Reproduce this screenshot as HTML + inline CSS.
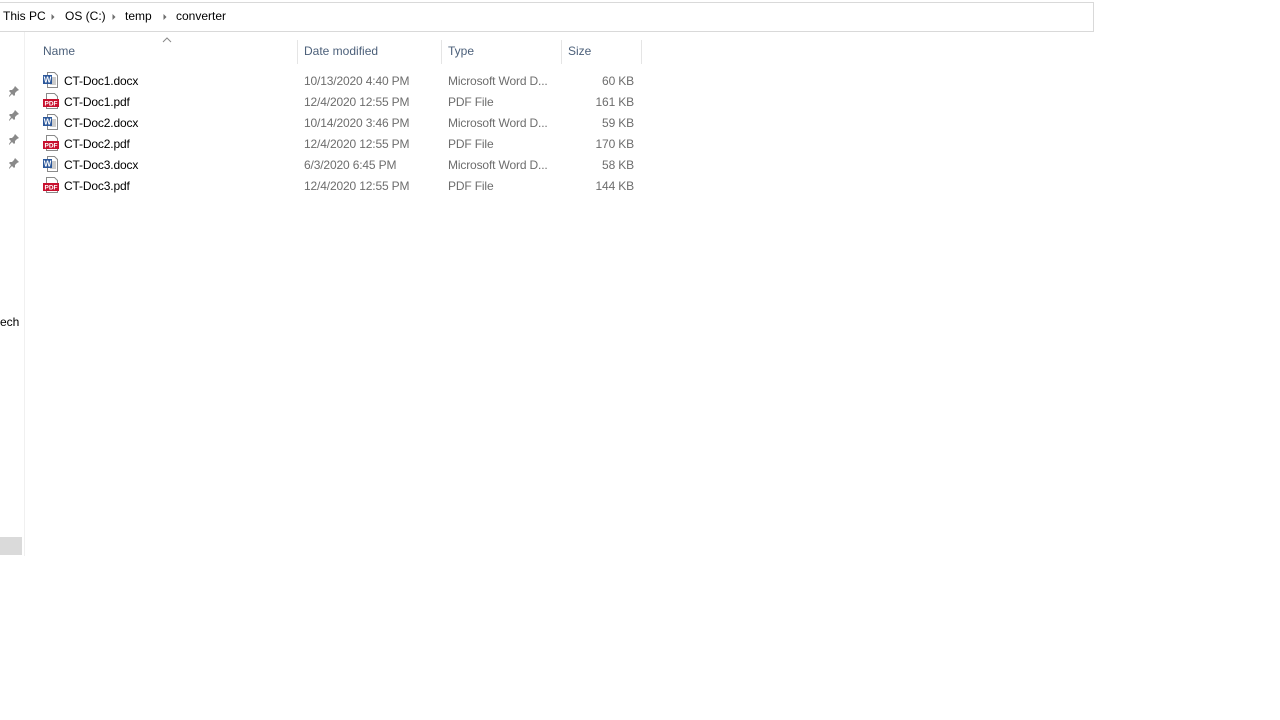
<!DOCTYPE html>
<html><head><style>
body{margin:0;width:1280px;height:720px;background:#fff;font-family:"Liberation Sans",sans-serif;font-size:12px;color:#000;position:relative;overflow:hidden}
.a{position:absolute;white-space:nowrap}
.g{color:#6d6d6d}
.h{color:#4c607a}
.sep{position:absolute;top:40px;height:24px;width:1px;background:#e5e5e5}
.r{text-align:right;width:60px}
.t{letter-spacing:-0.15px}
</style></head><body>
<div class="a" style="left:0;top:2px;width:1094px;height:1px;background:#d9d9d9"></div>
<div class="a" style="left:0;top:31px;width:1094px;height:1px;background:#d9d9d9"></div>
<div class="a" style="left:1093px;top:2px;width:1px;height:30px;background:#d9d9d9"></div>
<div class="a" style="left:3px;top:9px">This PC</div>
<svg class="a" style="left:50px;top:13px" width="6" height="8"><path d="M1.5 1l3 3-3 3z" fill="#6d6d6d"/></svg>
<div class="a" style="left:65px;top:9px">OS (C:)</div>
<svg class="a" style="left:111px;top:13px" width="6" height="8"><path d="M1.5 1l3 3-3 3z" fill="#6d6d6d"/></svg>
<div class="a" style="left:125px;top:9px">temp</div>
<svg class="a" style="left:162px;top:13px" width="6" height="8"><path d="M1.5 1l3 3-3 3z" fill="#6d6d6d"/></svg>
<div class="a" style="left:176px;top:9px">converter</div>
<div class="a" style="left:24px;top:32px;width:1px;height:524px;background:#f0f0f0"></div>
<div class="a" style="left:0;top:537px;width:22px;height:18px;background:#dadada"></div>
<div class="a" style="left:0;top:315px">ech</div>
<svg class="a" style="left:8px;top:85px" width="12" height="84" fill="#8a8a8a"><g id="p"><path d="M7 1l4 4-2 1-2 2 0 2-1 1-2-2-3 3v-1l2-3-2-2 1-1h2l2-2z"/></g><use href="#p" y="24"/><use href="#p" y="48"/><use href="#p" y="72"/></svg>
<svg class="a" style="left:162px;top:37px" width="10" height="6"><path d="M1 5l4-4 4 4" fill="none" stroke="#888"/></svg>
<div class="a h" style="left:43px;top:44px">Name</div>
<div class="a h" style="left:304px;top:44px">Date modified</div>
<div class="a h" style="left:448px;top:44px">Type</div>
<div class="a h" style="left:568px;top:44px">Size</div>
<div class="sep" style="left:297px"></div><div class="sep" style="left:441px"></div><div class="sep" style="left:561px"></div><div class="sep" style="left:641px"></div>
<svg width="0" height="0" style="position:absolute"><defs>
<g id="w"><path d="M4.5 .5h7l3 3v12h-10z" fill="#fff" stroke="#8a8a8a"/><path d="M7 6h6M7 8h6M7 10h6M7 12h6" stroke="#999"/><rect x="0" y="3" width="9" height="9" fill="#2b579a"/><text x="4.5" y="10.5" fill="#fff" font-size="8" font-weight="bold" text-anchor="middle" font-family="Liberation Sans">W</text></g>
<g id="d"><path d="M3.5 .5h8l3 3v12h-11z" fill="#fff" stroke="#8a8a8a"/><rect x="0" y="6" width="16" height="8" fill="#c8102e"/><text x="8" y="12.5" fill="#fff" font-size="6.5" font-weight="bold" text-anchor="middle" font-family="Liberation Sans">PDF</text></g>
</defs></svg>
<svg class="a" style="left:43px;top:72px" width="17" height="125">
<use href="#w" y="0"/><use href="#d" y="21"/><use href="#w" y="42"/><use href="#d" y="63"/><use href="#w" y="84"/><use href="#d" y="105"/></svg>
<div class="a t" style="left:64px;top:71px;line-height:21px">CT-Doc1.docx<br>CT-Doc1.pdf<br>CT-Doc2.docx<br>CT-Doc2.pdf<br>CT-Doc3.docx<br>CT-Doc3.pdf</div>
<div class="a g t" style="left:304px;top:71px;line-height:21px">10/13/2020 4:40 PM<br>12/4/2020 12:55 PM<br>10/14/2020 3:46 PM<br>12/4/2020 12:55 PM<br>6/3/2020 6:45 PM<br>12/4/2020 12:55 PM</div>
<div class="a g t" style="left:448px;top:71px;line-height:21px">Microsoft Word D...<br>PDF File<br>Microsoft Word D...<br>PDF File<br>Microsoft Word D...<br>PDF File</div>
<div class="a g r t" style="left:574px;top:71px;line-height:21px">60 KB<br>161 KB<br>59 KB<br>170 KB<br>58 KB<br>144 KB</div>
</body></html>
